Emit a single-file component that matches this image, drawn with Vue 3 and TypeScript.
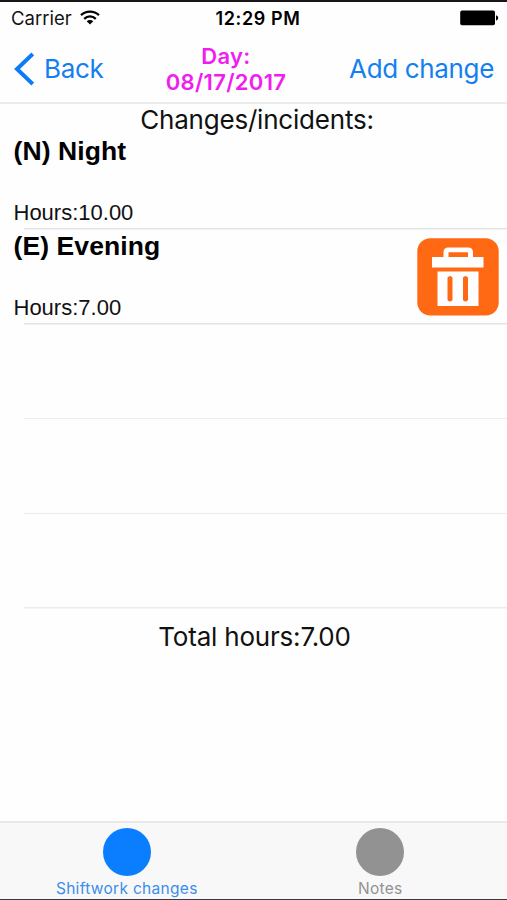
<script setup lang="ts">
interface Shift {
  title: string
  hours: string
  removable: boolean
}

interface Tab {
  key: string
  label: string
  active: boolean
}

const shifts: Shift[] = [
  { title: '(N) Night', hours: '10.00', removable: false },
  { title: '(E) Evening', hours: '7.00', removable: true },
]
const emptyRows = 3
const total = '7.00'

const tabs: Tab[] = [
  { key: 'changes', label: 'Shiftwork changes', active: true },
  { key: 'notes', label: 'Notes', active: false },
]
</script>

<template>
  <div class="screen">
    <div class="status">
      <div class="carrier">
        <span class="carrier-name">Carrier</span>
        <svg class="wifi" width="20" height="16" viewBox="0 0 20 16">
          <g fill="none" stroke="#000" stroke-width="2.3">
            <path d="M1 5.2C6 .4 14 .4 19 5.2" />
            <path d="M4.2 8.800C7.600 5.500 12.400 5.500 15.800 8.800" />
          </g>
          <path d="M6.700 11.200C8.600 9.500 11.400 9.500 13.300 11.200L10 14.500Z" />
        </svg>
      </div>
      <span class="clock">12:29 PM</span>
      <svg class="battery" width="39" height="16" viewBox="0 0 39 16">
        <rect x=".2" y=".6" width="34.8" height="14.6" rx="1.8" />
        <path d="M36 5.2C38.9 6 38.9 9.8 36 10.6Z" />
      </svg>
    </div>

    <header class="nav">
      <button class="back">
        <svg width="20" height="34" viewBox="0 0 20 34">
          <path d="M18.800 2L3 17L18.800 32" fill="none" stroke="#0b7cf8" stroke-width="4" />
        </svg>
        <span class="back-label">Back</span>
      </button>
      <h1 class="title"><span class="day">Day:</span><span class="date">08/17/2017</span></h1>
      <button class="add">Add change</button>
    </header>

    <main class="content">
      <h2 class="section"><span>Changes/incidents:</span></h2>
      <ul class="list">
        <li v-for="shift in shifts" :key="shift.title" class="row">
          <div class="info">
            <span class="name">{{ shift.title }}</span>
            <span class="hours">Hours:{{ shift.hours }}</span>
          </div>
          <button v-if="shift.removable" class="trash" aria-label="Delete">
            <svg width="82" height="78" viewBox="0 0 82 78">
              <rect x=".3" y=".3" width="81.4" height="77.2" rx="13" fill="#ff6914" />
              <path
                fill="#fff"
                fill-rule="evenodd"
                d="M15 19H26.5V14.5Q26.5 9.5 31.5 9.5H51Q56 9.5 56 14.5V19H66.5V29.5H15ZM31.5 14.3V19H51V14.3Z"
              />
              <path
                fill="#fff"
                fill-rule="evenodd"
                d="M20.500 33.500H61.500V68H20.500ZM30.500 39.500V62Q33 65 35.500 62V39.500Q33 36.500 30.500 39.500ZM46 39.500V62Q48.500 65 51 62V39.500Q48.500 36.500 46 39.500Z"
              />
            </svg>
          </button>
        </li>
        <li v-for="n in emptyRows" :key="n" class="row empty"></li>
      </ul>
      <p class="total"><span>Total hours:{{ total }}</span></p>
    </main>

    <nav class="tabs">
      <button v-for="tab in tabs" :key="tab.key" class="tab" :class="[tab.key, { active: tab.active }]">
        <span class="dot"></span>
        <span class="tab-label">{{ tab.label }}</span>
      </button>
    </nav>
  </div>
</template>

<style>
body {
  margin: 0;
  background: #fff;
}
</style>

<style scoped>
.screen {
  box-sizing: border-box;
  width: 507px;
  height: 900px;
  display: flex;
  flex-direction: column;
  overflow: hidden;
  background: #fefefe;
  border-top: 2px solid #171517;
  border-bottom: 1px solid #3a3a3c;
  font-family: Inter, "Liberation Sans", sans-serif;
  color: #111;
}

button {
  border: 0;
  padding: 0;
  margin: 0;
  background: none;
  font: inherit;
  color: inherit;
  white-space: nowrap;
}

.status {
  height: 32px;
  flex: none;
  display: grid;
  grid-template-columns: 1fr auto 1fr;
  align-items: center;
  padding: 0 8px 0 11px;
  box-sizing: border-box;
}

.carrier {
  display: flex;
  align-items: center;
  gap: 8px;
}

.carrier-name {
  font-size: 18.5px;
}

.clock {
  padding-left: 6px;
  font-size: 18px;
  letter-spacing: 0.65px;
  font-weight: 600;
  color: #000;
}

.battery {
  justify-self: end;
}

.nav {
  height: 70px;
  flex: none;
  box-sizing: border-box;
  display: grid;
  grid-template-columns: 138px 148px 1fr;
  align-items: center;
  padding: 1px 13px 0 14px;
  border-bottom: 2px solid #ececec;
  color: #1480f0;
}

.back {
  display: flex;
  align-items: center;
  gap: 10px;
}

.back-label,
.add {
  font-size: 26px;
  line-height: 34px;
  letter-spacing: -0.35px;
}

.add {
  justify-self: end;
}

.title {
  margin: 0;
  display: flex;
  flex-direction: column;
  align-items: center;
  font-size: 22px;
  line-height: 26px;
  letter-spacing: 0.3px;
  font-weight: 600;
  color: #f01cf0;
}

.content {
  flex: 1;
}

.section,
.total {
  margin: 0;
  text-align: center;
  font-size: 26px;
  font-weight: 400;
  line-height: 32px;
  letter-spacing: -0.2px;
}

.section {
  height: 31px;
  padding-left: 7px;
}

.total {
  padding: 12px 0 0 2px;
}

.list {
  margin: 0;
  padding: 0;
  list-style: none;
}

.row {
  height: 94.8px;
  box-sizing: border-box;
  display: flex;
  justify-content: space-between;
  align-items: center;
  padding: 0 8px 0 13.5px;
  background: linear-gradient(#e4e4e4, #e4e4e4) 24px 100% / 483px 1.5px no-repeat;
}

.empty {
  background-image: linear-gradient(#ececec, #ececec);
}

.info {
  height: 100%;
  display: flex;
  flex-direction: column;
  justify-content: space-between;
  font-family: "Liberation Sans", Arial, sans-serif;
}

.name {
  font-size: 26.5px;
  line-height: 32px;
  letter-spacing: 0.1px;
  font-weight: 700;
  color: #000;
}

.hours {
  font-size: 22px;
  line-height: 34px;
}

.trash {
  height: 78px;
}

.trash svg {
  display: block;
}

.tabs {
  height: 78px;
  flex: none;
  box-sizing: border-box;
  display: grid;
  grid-template-columns: 1fr 1fr;
  background: #f8f8f8;
  border-top: 2px solid #e9e9e9;
}

.tab {
  display: flex;
  flex-direction: column;
  align-items: center;
  padding-top: 5px;
  color: #929292;
}

.dot {
  width: 48px;
  height: 48px;
  flex: none;
  border-radius: 50%;
  background: #929292;
}

.tab-label {
  margin-top: 3px;
  font-size: 15.5px;
  line-height: 20px;
  letter-spacing: 0.3px;
}

.active {
  color: #3b8eed;
}

.active .dot {
  background: #0a7eff;
}
</style>
